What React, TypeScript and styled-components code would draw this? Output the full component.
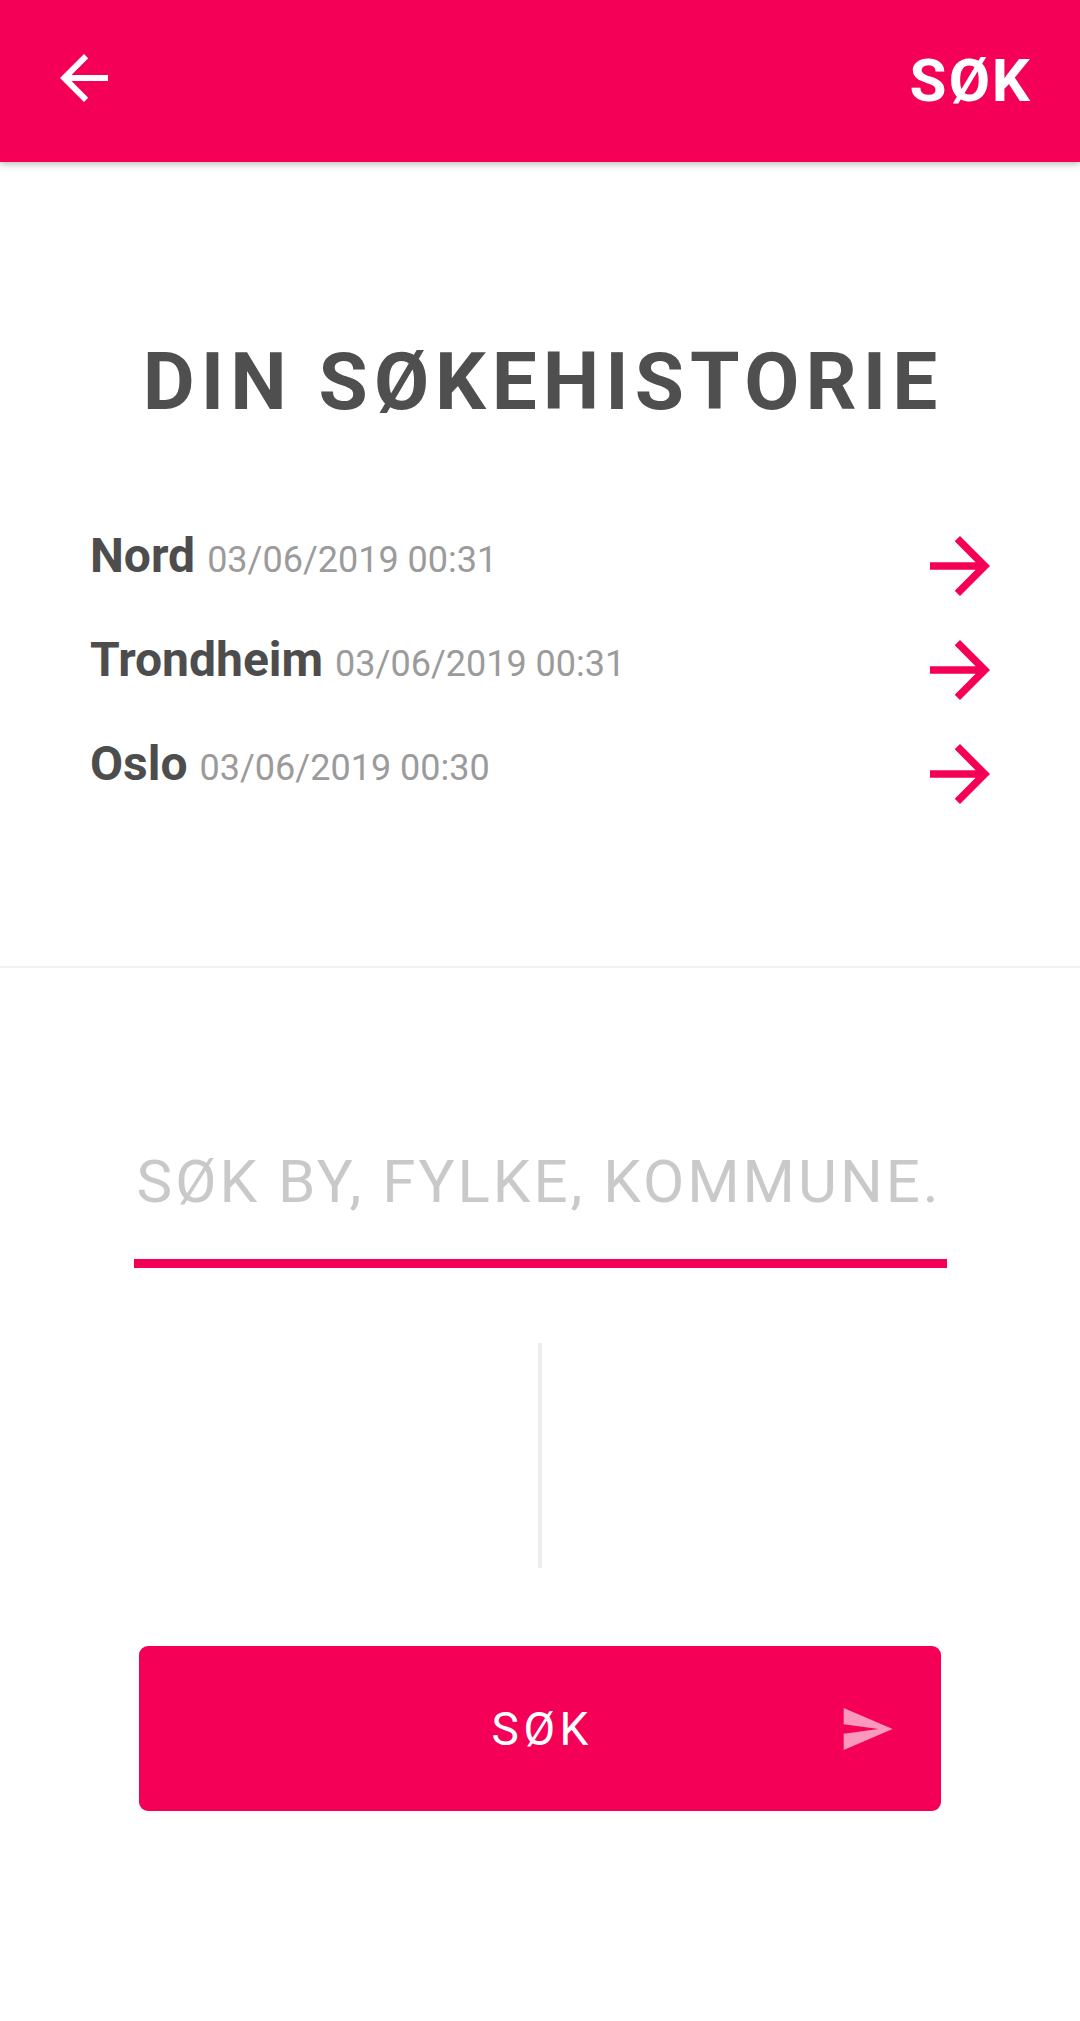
import React from "react";
import styled, { createGlobalStyle } from "styled-components";

const Global = createGlobalStyle`
  html, body { margin: 0; padding: 0; background: #ffffff; }
  body { font-family: Roboto, "Noto Sans", "Liberation Sans", sans-serif; }
  * { box-sizing: border-box; }
`;

const PINK = "#f50057";

const Page = styled.div`
  width: 1080px;
  min-height: 2021px;
  background: #ffffff;
  display: flex;
  flex-direction: column;
`;

const Header = styled.header`
  height: 162px;
  background: ${PINK};
  box-shadow: 0 2px 7px rgba(0, 0, 0, 0.28);
  display: flex;
  align-items: center;
  justify-content: space-between;
  padding: 0 48px 0 48px;
  position: relative;
  z-index: 1;
`;

const IconButton = styled.button`
  width: 72px;
  height: 72px;
  padding: 0;
  border: 0;
  background: transparent;
  display: flex;
  margin-top: -6px;
`;

const HeaderAction = styled.span`
  color: #ffffff;
  font-family: Roboto, sans-serif;
  font-weight: 700;
  font-size: 60px;
  line-height: 70px;
  letter-spacing: 2px;
`;

const Title = styled.h1`
  margin: 170px 0 0 0;
  text-align: center;
  font-family: Roboto, sans-serif;
  font-weight: 700;
  font-size: 80px;
  line-height: 100px;
  letter-spacing: 6px;
  padding-left: 6px;
  color: #4f4f4f;
`;

const History = styled.ul`
  list-style: none;
  margin: 81px 0 0 0;
  padding: 0 75px 0 90px;
  display: flex;
  flex-direction: column;
`;

const Row = styled.li`
  height: 104px;
  display: flex;
  align-items: flex-start;
  justify-content: space-between;
`;

const RowText = styled.div`
  margin-top: 15px;
  font-family: Roboto, sans-serif;
  line-height: 56px;
  white-space: nowrap;
`;

const Place = styled.span`
  font-weight: 700;
  font-size: 48px;
  color: #4d4d4d;
`;

const Stamp = styled.span`
  margin-left: 12px;
  font-weight: 400;
  font-size: 36px;
  color: #9b9b9b;
`;

const RowArrow = styled.span`
  display: flex;
  width: 90px;
  height: 90px;
  margin-top: 8px;
`;

const Divider = styled.hr`
  margin: 141px 0 0 0;
  border: 0;
  height: 2px;
  background: #f1f1f1;
`;

const SearchField = styled.input`
  display: block;
  align-self: center;
  margin-top: 179px;
  width: 810px;
  height: 70px;
  box-sizing: content-box;
  padding: 0 0 42px 3px;
  border: 0;
  border-bottom: 9px solid ${PINK};
  background: transparent;
  outline: none;
  font-family: Roboto, sans-serif;
  font-size: 60px;
  line-height: 70px;
  letter-spacing: 3px;
  color: #333;
  &::placeholder {
    color: #c9c9c9;
    opacity: 1;
  }
`;

const VerticalRule = styled.div`
  align-self: center;
  margin-top: 75px;
  width: 4px;
  height: 225px;
  background: #eeeeee;
`;

const SubmitButton = styled.button`
  align-self: center;
  margin-top: 78px;
  width: 802px;
  height: 165px;
  border: 0;
  border-radius: 9px;
  background: ${PINK};
  display: grid;
  grid-template-columns: 1fr auto 1fr;
  align-items: center;
  padding: 0;
`;

const SubmitLabel = styled.span`
  grid-column: 2;
  color: #ffffff;
  font-family: Roboto, sans-serif;
  font-weight: 400;
  font-size: 46px;
  letter-spacing: 4.5px;
  padding-left: 4.5px;
`;

const SubmitIcon = styled.span`
  grid-column: 3;
  justify-self: end;
  margin-right: 46px;
  display: flex;
  width: 56px;
  height: 56px;
`;

const BackIcon = () => (
  <svg width="72" height="72" viewBox="0 0 24 24" fill="#ffffff">
    <path d="M20 11H7.83l5.59-5.59L12 4l-8 8 8 8 1.41-1.41L7.83 13H20v-2z" />
  </svg>
);

const ForwardIcon = () => (
  <svg width="90" height="90" viewBox="0 0 24 24" fill={PINK}>
    <path d="M12 4l-1.41 1.41L16.17 11H4v2h12.17l-5.58 5.59L12 20l8-8z" />
  </svg>
);

const SendIcon = () => (
  <svg width="56" height="56" viewBox="0 0 24 24" fill="rgba(255,255,255,0.6)">
    <path d="M2.01 21L23 12 2.01 3 2 10l15 2-15 2z" />
  </svg>
);

const history = [
  { place: "Nord", stamp: "03/06/2019 00:31" },
  { place: "Trondheim", stamp: "03/06/2019 00:31" },
  { place: "Oslo", stamp: "03/06/2019 00:30" },
];

export default function App() {
  return (
    <>
      <Global />
      <Page>
        <Header>
          <IconButton aria-label="Tilbake">
            <BackIcon />
          </IconButton>
          <HeaderAction>SØK</HeaderAction>
        </Header>
        <Title>DIN SØKEHISTORIE</Title>
        <History>
          {history.map((h) => (
            <Row key={h.place}>
              <RowText>
                <Place>{h.place}</Place>
                <Stamp>{h.stamp}</Stamp>
              </RowText>
              <RowArrow>
                <ForwardIcon />
              </RowArrow>
            </Row>
          ))}
        </History>
        <Divider />
        <SearchField placeholder="SØK BY, FYLKE, KOMMUNE." />
        <VerticalRule />
        <SubmitButton>
          <SubmitLabel>SØK</SubmitLabel>
          <SubmitIcon>
            <SendIcon />
          </SubmitIcon>
        </SubmitButton>
      </Page>
    </>
  );
}
